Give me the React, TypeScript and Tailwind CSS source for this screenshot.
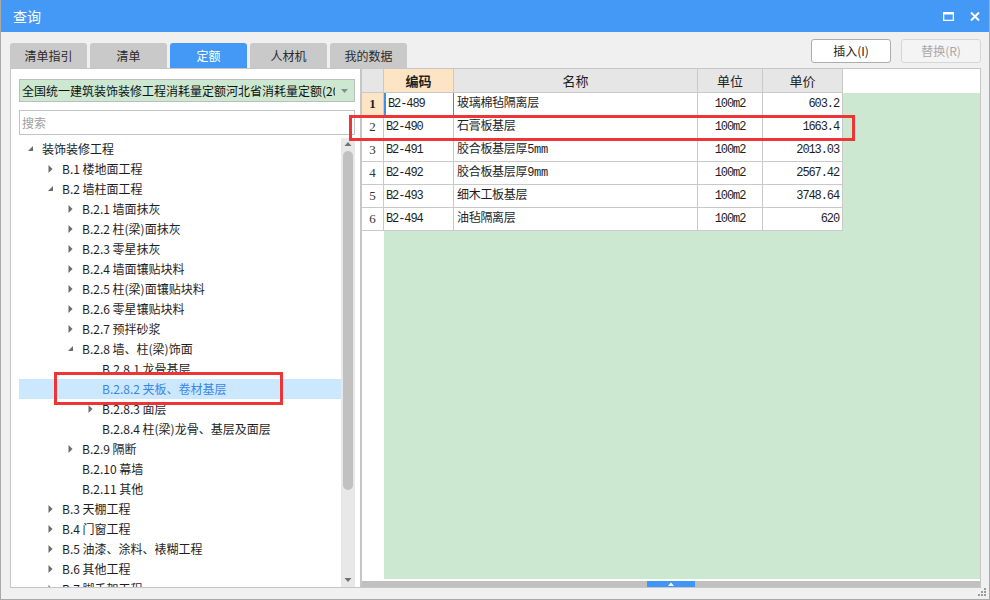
import React from "react";

// tree rows of the 定额 index
interface TreeNode {
  level: number;
  label: string;
  state: "open" | "closed" | "leaf";
  selected?: boolean;
}

const tree: TreeNode[] = [
  { level: 0, label: "装饰装修工程", state: "open" },
  { level: 1, label: "B.1 楼地面工程", state: "closed" },
  { level: 1, label: "B.2 墙柱面工程", state: "open" },
  { level: 2, label: "B.2.1 墙面抹灰", state: "closed" },
  { level: 2, label: "B.2.2 柱(梁)面抹灰", state: "closed" },
  { level: 2, label: "B.2.3 零星抹灰", state: "closed" },
  { level: 2, label: "B.2.4 墙面镶贴块料", state: "closed" },
  { level: 2, label: "B.2.5 柱(梁)面镶贴块料", state: "closed" },
  { level: 2, label: "B.2.6 零星镶贴块料", state: "closed" },
  { level: 2, label: "B.2.7 预拌砂浆", state: "closed" },
  { level: 2, label: "B.2.8 墙、柱(梁)饰面", state: "open" },
  { level: 3, label: "B.2.8.1 龙骨基层", state: "leaf" },
  { level: 3, label: "B.2.8.2 夹板、卷材基层", state: "leaf", selected: true },
  { level: 3, label: "B.2.8.3 面层", state: "closed" },
  { level: 3, label: "B.2.8.4 柱(梁)龙骨、基层及面层", state: "leaf" },
  { level: 2, label: "B.2.9 隔断", state: "closed" },
  { level: 2, label: "B.2.10 幕墙", state: "leaf" },
  { level: 2, label: "B.2.11 其他", state: "leaf" },
  { level: 1, label: "B.3 天棚工程", state: "closed" },
  { level: 1, label: "B.4 门窗工程", state: "closed" },
  { level: 1, label: "B.5 油漆、涂料、裱糊工程", state: "closed" },
  { level: 1, label: "B.6 其他工程", state: "closed" },
  { level: 1, label: "B.7 脚手架工程", state: "closed" },
];

interface QuotaRow {
  no: number;
  code: string;
  name: string;
  unit: string;
  price: string;
}

const rows: QuotaRow[] = [
  { no: 1, code: "B2-489", name: "玻璃棉毡隔离层", unit: "100m2", price: "603.2" },
  { no: 2, code: "B2-490", name: "石膏板基层", unit: "100m2", price: "1663.4" },
  { no: 3, code: "B2-491", name: "胶合板基层厚5mm", unit: "100m2", price: "2013.03" },
  { no: 4, code: "B2-492", name: "胶合板基层厚9mm", unit: "100m2", price: "2567.42" },
  { no: 5, code: "B2-493", name: "细木工板基层", unit: "100m2", price: "3748.64" },
  { no: 6, code: "B2-494", name: "油毡隔离层", unit: "100m2", price: "620" },
];

const tabs = ["清单指引", "清单", "定额", "人材机", "我的数据"];

const indent: Record<number, string> = {
  0: "pl-[8px]",
  1: "pl-[28px]",
  2: "pl-[48px]",
  3: "pl-[68px]",
};

const Arrow = ({ state }: { state: TreeNode["state"] }) => (
  <svg width="15" height="20" viewBox="0 0 15 20" className="shrink-0">
    {state === "closed" && <polygon points="1.5,6 5.5,10 1.5,14" fill="#6b6b6b" />}
    {state === "open" && <polygon points="6,7 6,12 1,12" fill="#6b6b6b" />}
  </svg>
);

export default function App() {
  return (
    <div className="relative w-[990px] h-[600px] flex flex-col bg-[#f0f0f0] border-x border-b border-[#a9a9a9] font-['Noto_Sans_CJK_SC',sans-serif] text-[#1e1e1e] overflow-hidden">
      {/* title bar */}
      <div className="h-[32px] shrink-0 bg-[#4499f6] flex items-center pl-[12px] pr-[9px] text-white text-[14px]">
        <span>查询</span>
        <div className="ml-auto flex items-center gap-[16px]">
          <svg width="11" height="9" viewBox="0 0 11 9">
            <path d="M0.5 0.5 H10.5 V8.5 H0.5 Z" fill="none" stroke="white" strokeWidth="1.6" />
            <rect x="0" y="0" width="11" height="2.5" fill="white" />
          </svg>
          <svg width="10" height="9" viewBox="0 0 10 9">
            <path d="M1 0.5 L9 8.5 M9 0.5 L1 8.5" stroke="white" strokeWidth="2" />
          </svg>
        </div>
      </div>

      <div className="flex-1 min-h-0 flex flex-col pl-[9px] pr-[8px] pt-[7px] pb-[11px]">
        {/* tabs + buttons */}
        <div className="h-[29px] shrink-0 flex">
          <div className="self-end flex gap-[3px]">
            {tabs.map((t) => (
              <div
                key={t}
                className={`w-[77px] h-[25px] rounded-t-[3px] flex items-center justify-center text-[12px] ${
                  t === "定额" ? "bg-[#4499f6] text-white" : "bg-[#c9c9c9] text-[#2a2a2a]"
                }`}
              >
                {t}
              </div>
            ))}
          </div>
          <div className="ml-auto self-start flex gap-[10px]">
            <div className="w-[80px] h-[24px] bg-white border border-[#adadad] rounded-[3px] flex items-center justify-center text-[12px] text-[#222]">
              插入(I)
            </div>
            <div className="w-[80px] h-[24px] bg-[#f4f4f4] border border-[#d6d6d6] rounded-[3px] flex items-center justify-center text-[12px] text-[#a8a8a8]">
              替换(R)
            </div>
          </div>
        </div>

        {/* panels */}
        <div className="flex-1 min-h-0 flex">
          {/* left: tree */}
          <div className="w-[351px] shrink-0 bg-white border border-[#c6c6c6] flex flex-col pl-[8px] pr-[5px] pt-[10px]">
            <div className="h-[23px] shrink-0 bg-[#cde8d0] border border-[#bdbdbd] flex items-center pl-[2px] pr-[6px] text-[12px] text-[#111]">
              <span className="flex-1 overflow-hidden whitespace-nowrap">
                全国统一建筑装饰装修工程消耗量定额河北省消耗量定额(2012)
              </span>
              <svg width="7" height="4" viewBox="0 0 7 4" className="ml-[6px] shrink-0">
                <polygon points="0,0 7,0 3.5,4" fill="#8a8a8a" />
              </svg>
            </div>
            <div className="mt-[8px] h-[25px] shrink-0 border border-[#c3c3c3] flex items-center pl-[2px] text-[12px] text-[#a0a0a0]">
              搜索
            </div>
            <div className="mt-[3px] flex-1 min-h-0 flex">
              <div className="flex-1 min-w-0 overflow-hidden pt-[1px]">
                {tree.map((n) => (
                  <div
                    key={n.label}
                    className={`h-[20px] flex items-center whitespace-nowrap text-[12px] ${indent[n.level]} ${
                      n.selected ? "bg-[#cce8ff] text-[#3a87e6]" : ""
                    }`}
                  >
                    <Arrow state={n.state} />
                    <span>{n.label}</span>
                  </div>
                ))}
              </div>
              {/* vertical scrollbar */}
              <div className="w-[14px] shrink-0 bg-[#e8e8e8] flex flex-col items-center">
                <svg width="8" height="12" viewBox="0 0 8 12" className="shrink-0">
                  <polygon points="0.5,8 7.5,8 4,4" fill="#707070" />
                </svg>
                <div className="mt-[1px] w-[10px] h-[339px] rounded-full bg-[#c1c1c1]" />
                <div className="flex-1" />
                <svg width="8" height="12" viewBox="0 0 8 12" className="shrink-0 mb-[1px]">
                  <polygon points="0.5,4 7.5,4 4,8" fill="#707070" />
                </svg>
              </div>
            </div>
          </div>

          {/* right: quota table */}
          <div className="flex-1 min-w-0 bg-white border border-[#c6c6c6] flex flex-col">
            <div className="h-[24px] shrink-0 flex text-[13px]">
              <div className="w-[22px] bg-[#e6e6e6] border-r border-b border-[#c9c9c9]" />
              <div className="w-[70px] bg-[#fde4c5] border-r border-b border-[#c9c9c9] flex items-center justify-center font-bold">
                编码
              </div>
              <div className="w-[244px] bg-[#e6e6e6] border-r border-b border-[#c9c9c9] flex items-center justify-center">
                名称
              </div>
              <div className="w-[65px] bg-[#e6e6e6] border-r border-b border-[#c9c9c9] flex items-center justify-center">
                单位
              </div>
              <div className="w-[80px] bg-[#e6e6e6] border-r border-b border-[#c9c9c9] flex items-center justify-center">
                单价
              </div>
            </div>
            <div className="flex-1 min-h-0 flex">
              <div className="w-[22px] shrink-0 bg-white">
                {rows.map((r) => (
                  <div
                    key={r.no}
                    className={`h-[23px] border-r border-b border-[#c9c9c9] flex items-center justify-center text-[13px] font-['Liberation_Serif',serif] ${
                      r.no === 1 ? "bg-[#fde4c5] font-bold" : "text-[#333]"
                    }`}
                  >
                    {r.no}
                  </div>
                ))}
              </div>
              <div className="flex-1 min-w-0 bg-[#cde8d0]">
                {rows.map((r) => (
                  <div key={r.no} className="h-[23px] flex w-fit bg-white text-[12px]">
                    <div
                      className={`w-[70px] border-r border-b flex items-center pl-[2px] font-['Liberation_Mono',monospace] text-[12px] tracking-[-1.1px] ${
                        r.no === 1
                          ? "border-[#7d7d7d] border-l-2 border-l-[#3d8fe8] pl-0"
                          : "border-[#c9c9c9]"
                      }`}
                    >
                      {r.code}
                    </div>
                    <div className="w-[244px] border-r border-b border-[#c9c9c9] flex items-center pl-[3px] font-['Liberation_Mono','Noto_Sans_CJK_SC',monospace] tracking-[-0.3px]">
                      {r.name}
                    </div>
                    <div className="w-[65px] border-r border-b border-[#c9c9c9] flex items-center justify-center font-['Liberation_Mono',monospace] text-[12px] tracking-[-1.1px]">
                      {r.unit}
                    </div>
                    <div className="w-[80px] border-r border-b border-[#c9c9c9] flex items-center justify-end pr-[3px] font-['Liberation_Mono',monospace] text-[12px] tracking-[-1.1px]">
                      {r.price}
                    </div>
                  </div>
                ))}
              </div>
            </div>
            <div className="h-[2px] shrink-0 bg-white" />
            <div className="h-[6px] shrink-0 bg-[#c0c0c0] flex justify-center">
              <div className="w-[48px] bg-[#3f96f5] flex items-center justify-center">
                <svg width="6" height="4" viewBox="0 0 6 4">
                  <polygon points="0,4 6,4 3,0.5" fill="white" />
                </svg>
              </div>
            </div>
          </div>
        </div>
      </div>

      {/* red annotation boxes */}
      <div className="absolute left-[53px] top-[372px] w-[229px] h-[33px] border-[3px] border-[#ee3535]" />
      <div className="absolute left-[348px] top-[115px] w-[506px] h-[26px] border-[3px] border-[#ee3535]" />

      {/* resize grip */}
      <svg width="10" height="10" viewBox="0 0 10 10" className="absolute right-[2px] bottom-[2px]">
        <rect x="7" y="1" width="2" height="2" fill="#9a9a9a" />
        <rect x="4" y="4" width="2" height="2" fill="#9a9a9a" />
        <rect x="7" y="4" width="2" height="2" fill="#9a9a9a" />
        <rect x="1" y="7" width="2" height="2" fill="#9a9a9a" />
        <rect x="4" y="7" width="2" height="2" fill="#9a9a9a" />
        <rect x="7" y="7" width="2" height="2" fill="#9a9a9a" />
      </svg>
    </div>
  );
}
